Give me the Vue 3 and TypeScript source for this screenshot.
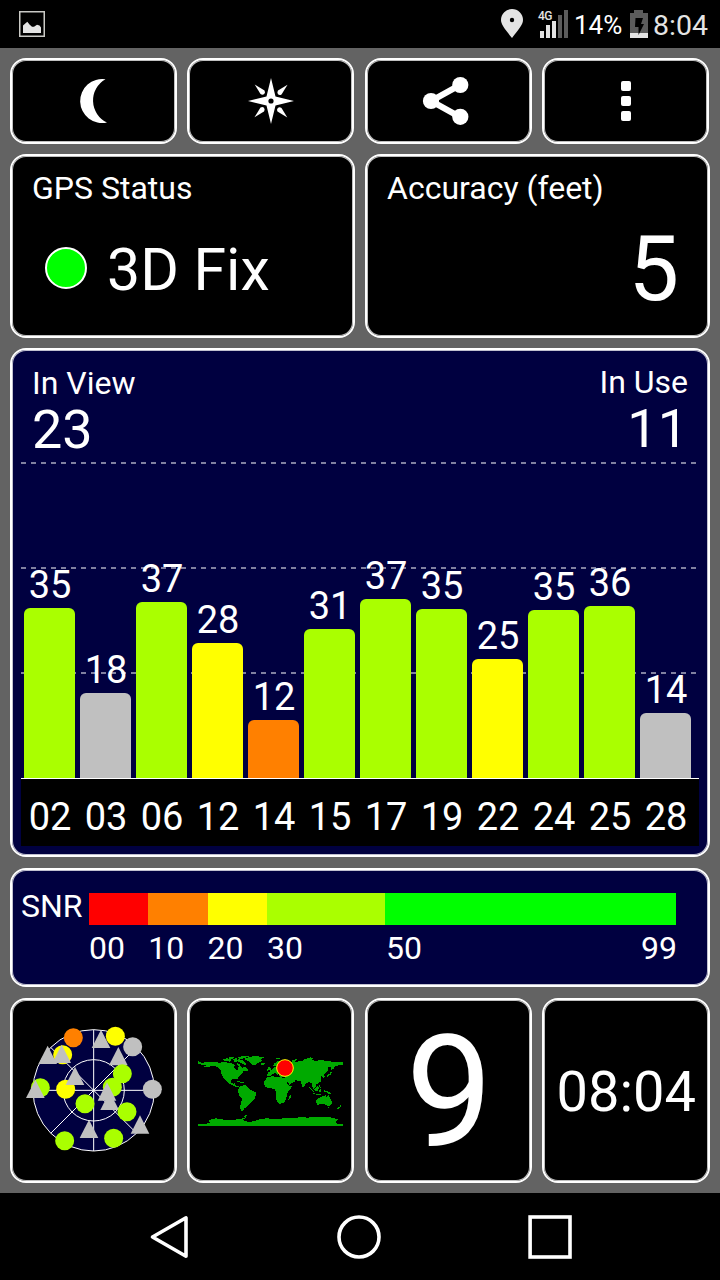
<script setup lang="ts">
type Tone = 'lime' | 'yellow' | 'orange' | 'silver'

interface Satellite {
  id: string
  snr: number
  height: number
  tone: Tone
}

interface Marker {
  kind: 'dot' | 'tri'
  x: number
  y: number
  tone: Tone
}

const satellites: Satellite[] = [
  { id: '02', snr: 35, height: 170, tone: 'lime' },
  { id: '03', snr: 18, height: 85, tone: 'silver' },
  { id: '06', snr: 37, height: 176, tone: 'lime' },
  { id: '12', snr: 28, height: 135, tone: 'yellow' },
  { id: '14', snr: 12, height: 58, tone: 'orange' },
  { id: '15', snr: 31, height: 149, tone: 'lime' },
  { id: '17', snr: 37, height: 179, tone: 'lime' },
  { id: '19', snr: 35, height: 169, tone: 'lime' },
  { id: '22', snr: 25, height: 119, tone: 'yellow' },
  { id: '24', snr: 35, height: 168, tone: 'lime' },
  { id: '25', snr: 36, height: 172, tone: 'lime' },
  { id: '28', snr: 14, height: 65, tone: 'silver' },
]

const scale = [
  { label: '00', tone: 'red' },
  { label: '10', tone: 'orange' },
  { label: '20', tone: 'yellow' },
  { label: '30', tone: 'lime' },
  { label: '50', tone: 'green' },
]

const markers: Marker[] = [
  { kind: 'dot', x: 190, y: 113, tone: 'orange' },
  { kind: 'tri', x: 273, y: 117, tone: 'silver' },
  { kind: 'dot', x: 316, y: 109, tone: 'yellow' },
  { kind: 'dot', x: 368, y: 140, tone: 'silver' },
  { kind: 'tri', x: 113, y: 165, tone: 'silver' },
  { kind: 'dot', x: 158, y: 164, tone: 'yellow' },
  { kind: 'tri', x: 155, y: 162, tone: 'silver' },
  { kind: 'tri', x: 325, y: 169, tone: 'silver' },
  { kind: 'dot', x: 337, y: 221, tone: 'lime' },
  { kind: 'dot', x: 307, y: 262, tone: 'lime' },
  { kind: 'dot', x: 427, y: 268, tone: 'silver' },
  { kind: 'dot', x: 91, y: 263, tone: 'lime' },
  { kind: 'tri', x: 76, y: 267, tone: 'silver' },
  { kind: 'dot', x: 167, y: 268, tone: 'yellow' },
  { kind: 'tri', x: 195, y: 228, tone: 'silver' },
  { kind: 'tri', x: 291, y: 275, tone: 'silver' },
  { kind: 'tri', x: 299, y: 303, tone: 'silver' },
  { kind: 'dot', x: 225, y: 311, tone: 'lime' },
  { kind: 'dot', x: 351, y: 335, tone: 'lime' },
  { kind: 'tri', x: 237, y: 387, tone: 'silver' },
  { kind: 'tri', x: 390, y: 374, tone: 'silver' },
  { kind: 'dot', x: 164, y: 422, tone: 'lime' },
  { kind: 'dot', x: 311, y: 415, tone: 'lime' },
]

const triangle = (m: Marker): string =>
  `${m.x},${m.y - 28} ${m.x + 28},${m.y + 27} ${m.x - 28},${m.y + 27}`
</script>

<template>
  <div class="screen">
    <header class="statusbar">
      <svg class="picture" viewBox="19 11 26 26">
        <rect x="19.75" y="11.75" width="24.5" height="24.5" fill="none" stroke="#c9c9c5" stroke-width="1.5" />
        <path d="M23 33V25.500L27.300 21.800L29.500 24.500L32 26.800H34L37 24.800L39.500 25.500L41 27.500V33Z" fill="#e4e4e4" />
      </svg>
      <svg class="pin" viewBox="501 9 22 29">
        <path d="M512 9A11 11 0 0 1 523 20C523 24.500 519 29 512 38C505 29 501 24.500 501 20A11 11 0 0 1 512 9Z" fill="#e4e4e4" />
        <circle cx="512" cy="20" r="2.200" fill="#000" />
      </svg>
      <div class="signal">
        <span class="net">4G</span>
        <svg class="bars" viewBox="540 10 28 28">
          <path d="M540 31h4v7h-4zM546 25h4v13h-4zM552 21h4v17h-4z" fill="#e4e4e4" />
          <path d="M558 15h4v23h-4zM564 10h4v28h-4z" fill="#5c5c5c" />
        </svg>
      </div>
      <span class="percent">14%</span>
      <svg class="battery" viewBox="630 10 18 28">
        <path d="M634 10h9v3h5v20h-18V13h4z" fill="#5c5c5c" />
        <path d="M630 33h18v5h-18z" fill="#e4e4e4" />
        <path d="M635.500 18H643L641 24H644L638.500 35V27H635Z" fill="#000" />
      </svg>
      <span class="clock">8:04</span>
    </header>

    <main class="board">
      <nav class="row toolbar">
        <div class="card">
          <svg viewBox="13 61 161 80">
            <path d="M105.500 79.300A22 22 0 1 0 107 122.500A24.300 24.300 0 0 1 105.500 79.300Z" fill="#fff" />
          </svg>
        </div>
        <div class="card">
          <svg viewBox="190 61 161 80">
            <g transform="translate(271 101)" fill="#fff">
              <path d="M0 -23L4.500 -4.500L23 0L4.500 4.500L0 23L-4.500 4.500L-23 0L-4.500 -4.500Z" />
              <g v-for="a in [0, 90, 180, 270]" :key="a" :transform="`rotate(${a})`">
                <path d="M16.500 -16.300L10.500 -6.500Q8.500 -5.300 7 -6.800Q5.700 -8.500 7 -10.500Z" />
              </g>
              <circle r="2.600" fill="#000" />
            </g>
          </svg>
        </div>
        <div class="card">
          <svg viewBox="368 61 161 80">
            <path d="M460 85L431 101L460 117" fill="none" stroke="#fff" stroke-width="6" />
            <circle cx="431" cy="101" r="8.100" fill="#fff" />
            <circle cx="460.300" cy="85" r="8.100" fill="#fff" />
            <circle cx="460.300" cy="116.800" r="8.100" fill="#fff" />
          </svg>
        </div>
        <div class="card">
          <svg viewBox="545 61 161 80">
            <rect v-for="y in [81, 96, 111]" :key="y" x="621" :y="y" width="10" height="10" rx="2" fill="#fff" />
          </svg>
        </div>
      </nav>

      <section class="row status">
        <div class="card">
          <h2>GPS Status</h2>
          <div class="fix">
            <span class="lamp"></span>
            <span>3D Fix</span>
          </div>
        </div>
        <div class="card">
          <h2>Accuracy (feet)</h2>
          <div class="accuracy">5</div>
        </div>
      </section>

      <section class="card navy chart">
        <div class="counts">
          <div>
            <h2>In View</h2>
            <div class="count">23</div>
          </div>
          <div class="use">
            <h2>In Use</h2>
            <div class="count">11</div>
          </div>
        </div>
        <div class="plot">
          <svg class="grid" viewBox="0 0 678 316">
            <path d="M0 1H675M0 106H675M0 211H675" stroke="#8080a0" stroke-width="2" stroke-dasharray="5 5" />
          </svg>
          <div v-for="s in satellites" :key="s.id" class="column">
            <span class="value">{{ s.snr }}</span>
            <div class="bar" :class="s.tone" :style="{ height: s.height + 'px' }"></div>
          </div>
        </div>
        <div class="axis">
          <span v-for="s in satellites" :key="s.id">{{ s.id }}</span>
        </div>
      </section>

      <section class="card navy snr">
        <span class="name">SNR</span>
        <div class="scale">
          <div v-for="s in scale" :key="s.label" class="step">
            <div class="swatch" :class="s.tone"></div>
            <div class="ticks" :class="{ last: s.label === '50' }">
              <span>{{ s.label }}</span>
              <span v-if="s.label === '50'">99</span>
            </div>
          </div>
        </div>
      </section>

      <section class="row tiles">
        <div class="card">
          <svg viewBox="9 3 483 537">
            <g fill="none" stroke="#fff" stroke-width="3">
              <circle cx="251" cy="271" r="182" fill="#000040" />
              <circle cx="251" cy="271" r="92" />
              <path d="M251 89V453M69 271H433M122 142L380 400M380 142L122 400" />
            </g>
            <template v-for="(m, i) in markers" :key="i">
              <circle v-if="m.kind === 'dot'" :class="m.tone" :cx="m.x" :cy="m.y" r="28.500" />
              <polygon v-else :class="m.tone" :points="triangle(m)" />
            </template>
          </svg>
        </div>
        <div class="card">
          <svg viewBox="12 -117 483 537">
            <g fill="#00aa00" shape-rendering="crispEdges">
              <path d="M36 63L48 70L60 65L75 65L100 68L118 66L128 69L140 71L148 76L143 82L150 88L156 92L156 83L162 76L170 84L176 80L187 90L184 94L172 94L168 100L160 108L155 114L154 122L150 116L138 118L134 124L136 130L143 131L145 127L148 132L150 138L158 139L164 141L160 143L150 141L140 135L128 130L122 122L115 118L108 106L104 92L98 84L90 79L78 78L66 82L54 80L62 76L36 72Z" />
              <path d="M111 57L124 55L138 60L132 65L114 63ZM128 51L148 53L139 57L128 56ZM142 56L152 55L156 63L151 68L143 64ZM156 57L171 62L182 72L176 75L161 67L155 63ZM151 69L163 72L160 80L154 76ZM154 51L180 47L190 50L172 55L162 58Z" />
              <path d="M174 57L184 53L204 48L236 51L226 57L228 63L214 70L207 76L198 75L190 65Z" />
              <path d="M154 123L169 126L179 129L168 129L155 126ZM181 89L188 91L185 94Z" />
              <path d="M164 137L180 136L188 144L196 151L212 158L208 170L204 180L194 190L186 196L180 204L174 206L171 214L165 213L162 203L166 184L168 176L160 166L156 154L158 144Z" />
              <path d="M243 113L262 107L268 112L284 112L300 114L304 130L310 137L319 138L306 156L303 164L300 178L294 188L280 192L274 186L270 174L270 158L266 146L250 145L240 142L234 132L236 122ZM308 172L315 165L313 176L307 182Z" />
              <path d="M244 105L246 96L254 97L251 90L260 88L264 82L272 82L268 77L262 78L264 71L278 62L306 63L318 66L319 59L335 58L324 66L348 63L354 57L366 55L372 52L382 55L376 60L392 63L404 59L422 64L446 65L454 67L470 65L470 75L459 76L447 80L439 88L435 86L436 79L424 83L426 92L419 99L411 105L416 110L412 114L406 107L404 113L405 122L398 130L388 132L391 140L385 144L387 153L380 143L378 131L370 126L361 130L354 139L350 141L344 124L336 122L325 119L328 124L310 134L302 121L296 111L282 110L278 103L274 106L268 97L264 102L258 104L253 109L245 109Z" />
              <path d="M246 82L251 81L256 89L247 91ZM244 88L247 91L242 93ZM226 70L236 70L233 75L226 74ZM270 54L284 53L281 58L272 57Z" />
              <path d="M427 103L433 99L434 93L437 96L435 104L424 110L420 108ZM432 90L438 90L434 93L446 77L444 85ZM402 124L405 121L402 130Z" />
              <path d="M398 131L401 136L407 145L401 143ZM387 145L395 139L400 143L395 153L387 153ZM370 142L375 144L386 159L378 153ZM382 160L396 162L407 163L404 165L384 163ZM400 149L407 147L403 156L399 157ZM413 151L424 153L436 161L431 163L421 157L412 154Z" />
              <path d="M390 184L394 176L404 172L410 168L420 166L422 172L428 165L432 176L438 184L436 194L428 198L418 194L408 191L394 195ZM426 200L431 200L428 204ZM463 195L467 198L460 203ZM458 202L462 203L457 208L454 206Z" />
              <path d="M36 252H60L72 248L68 240L90 235L120 240L142 240L166 236L176 233L174 228L182 225L180 233L170 240L190 247L204 243L220 238L240 235L280 237L300 233L330 234L350 230L364 234L380 230L430 231L458 238L448 245L452 251L470 252V258H36Z" />
            </g>
            <circle cx="297" cy="84" r="25" fill="#f00" stroke="#ff0" stroke-width="3" />
          </svg>
        </div>
        <div class="card nine">9</div>
        <div class="card time">08:04</div>
      </section>
    </main>

    <footer class="navbar">
      <svg viewBox="0 1193 720 87">
        <g fill="none" stroke="#fff" stroke-width="3.600">
          <path d="M152.500 1237L186 1217.800V1256.200Z" stroke-linejoin="round" />
          <circle cx="359" cy="1237" r="20" />
          <rect x="530.100" y="1217" width="39.900" height="40" />
        </g>
      </svg>
    </footer>
  </div>
</template>

<style>
body {
  margin: 0;
  background: #000;
}
</style>

<style scoped>
.screen {
  width: 720px;
  height: 1280px;
  display: flex;
  flex-direction: column;
  overflow: hidden;
  background: #636363;
  color: #fff;
  font-family: Roboto, "Liberation Sans", sans-serif;
}
svg {
  display: block;
  flex: none;
}
.statusbar {
  box-sizing: border-box;
  height: 48px;
  display: flex;
  align-items: flex-start;
  padding: 9px 0 0 19px;
  background: #000;
}
.picture {
  width: 26px;
  height: 26px;
  margin-top: 2px;
}
.pin {
  width: 22px;
  height: 29px;
  margin-left: 456px;
}
.signal {
  position: relative;
  width: 30px;
  margin: 1px 0 0 15px;
}
.net {
  position: absolute;
  left: 0;
  top: 0;
  font-size: 12px;
  line-height: 12px;
  font-weight: 500;
  letter-spacing: -0.5px;
  color: #e4e4e4;
}
.bars {
  width: 28px;
  height: 28px;
  margin-left: 2px;
}
.percent {
  width: 56px;
  margin-left: 6px;
  font-size: 26px;
  line-height: 32px;
}
.battery {
  width: 18px;
  height: 28px;
  margin-top: 1px;
}
.clock {
  margin-left: 5px;
  font-size: 28.500px;
  line-height: 33px;
  color: #e4e4e4;
}
.board {
  box-sizing: border-box;
  height: 1145px;
  padding: 10px 10px 0;
}
.card {
  box-sizing: border-box;
  border: 2px solid #fff;
  padding: 1px;
  border-radius: 16px;
  background: #000;
  box-shadow: inset 0 0 0 1px rgba(255, 255, 255, 0.75);
}
.navy {
  background: #000040;
}
.row {
  display: grid;
}
.toolbar {
  height: 86px;
  grid-template-columns: 167px 167px 167px 167px;
  column-gap: 10.400px;
}
.toolbar svg {
  width: 161px;
  height: 80px;
}
h2 {
  margin: 0;
  font-size: 32px;
  line-height: 38px;
  font-weight: 400;
}
.status {
  height: 184px;
  margin-top: 10px;
  grid-template-columns: 345px 345px;
  column-gap: 10px;
}
.status .card {
  padding: 13px 28px 0 20px;
}
.fix {
  display: flex;
  margin-top: 33px;
  padding-left: 13px;
  font-size: 59px;
  line-height: 60px;
}
.lamp {
  box-sizing: border-box;
  width: 42px;
  height: 42px;
  margin: 7px 20px 0 0;
  border: 2px solid #fff;
  border-radius: 50%;
  background: #0f0;
}
.accuracy {
  margin-top: 18px;
  padding-right: 1px;
  font-size: 90px;
  line-height: 90px;
  text-align: right;
}
.chart {
  height: 509px;
  margin-top: 10px;
}
.counts {
  box-sizing: border-box;
  height: 111px;
  display: flex;
  justify-content: space-between;
  padding: 13px 19px 0;
}
.count {
  font-size: 54px;
  line-height: 56px;
}
.use {
  text-align: right;
}
.use h2 {
  margin-top: -1px;
}
.use .count {
  padding-right: 0;
}
.plot {
  box-sizing: border-box;
  position: relative;
  height: 316px;
  margin: 0 8px;
  padding-left: 3px;
  display: flex;
  align-items: flex-end;
  gap: 5px;
}
.grid {
  position: absolute;
  left: 0;
  top: 0;
  width: 678px;
  height: 316px;
}
.column {
  position: relative;
  width: 51px;
  text-align: center;
}
.value {
  display: block;
  padding: 0 0 1px 1px;
  font-size: 38px;
  line-height: 44px;
}
.bar {
  border-radius: 6px 6px 0 0;
}
.axis {
  box-sizing: border-box;
  height: 68px;
  margin: 0 8px;
  padding: 5px 0 0 3px;
  display: flex;
  gap: 5px;
  border-top: 1px solid #fff;
  background: #000;
  font-size: 38px;
  line-height: 67px;
  text-align: center;
}
.axis span {
  width: 50px;
  padding-left: 1px;
}
.snr {
  height: 119px;
  margin-top: 11px;
  padding: 23px 0 0 9px;
  display: flex;
  font-size: 32px;
}
.name {
  width: 68px;
  line-height: 26px;
}
.scale {
  display: grid;
  grid-template-columns: 59.300px 59.300px 59.400px 118px 291px;
}
.swatch {
  height: 32px;
}
.ticks {
  display: flex;
  justify-content: space-between;
  line-height: 46px;
}
.last {
  margin: 0 -1px 0 1px;
}
.tiles {
  height: 185px;
  margin-top: 11px;
  grid-template-rows: 185px;
  grid-template-columns: 167px 167px 167px 168px;
  column-gap: 10.400px;
}
.tiles svg {
  width: 161px;
  height: 179px;
}
.nine {
  padding-left: 3px;
  font-size: 155px;
  line-height: 184px;
  text-align: center;
}
.time {
  font-size: 56px;
  line-height: 182px;
  text-align: center;
  white-space: nowrap;
}
.navbar {
  height: 87px;
  background: #000;
}
.navbar svg {
  width: 720px;
  height: 87px;
}
.red { background: #f00; fill: #f00; }
.orange { background: #ff8000; fill: #ff8000; }
.yellow { background: #ff0; fill: #ff0; }
.lime { background: #aaff00; fill: #aaff00; }
.green { background: #0f0; fill: #0f0; }
.silver { background: #c0c0c0; fill: #c0c0c0; }
</style>
